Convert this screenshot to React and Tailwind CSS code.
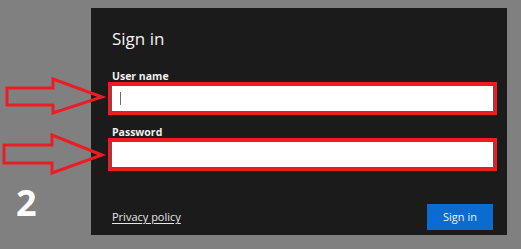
import React from "react";

const font = { fontFamily: '"Open Sans", "Noto Sans", sans-serif' };

const RedField = ({ cursor = false }) => (
  <div className="mr-[10px] -ml-[4px] h-[33px] border-[3px] border-[#ed1c24]">
    <div className="relative h-full border border-[#5a5a5a] bg-white">
      {cursor && (
        <div className="absolute left-[8px] top-[6px] h-[13px] w-px bg-[#6b6b6b]" />
      )}
    </div>
  </div>
);

const Arrows = () => (
  <svg
    className="pointer-events-none absolute left-0 top-0"
    width="521"
    height="249"
    viewBox="0 0 521 249"
  >
    <g fill="none" stroke="#ed1c24" strokeWidth="3" strokeLinejoin="miter">
      <polygon points="7,88 53,88 53,79 102,97 53,113 53,105 7,105" />
      <polygon points="4,145 52,145 52,135 102,155 52,173 52,163 4,163" />
    </g>
  </svg>
);

export default function App() {
  return (
    <div
      className="relative h-[249px] w-[521px] overflow-hidden bg-[#808080]"
      style={font}
    >
      <div className="ml-[91px] mt-[8px] flex h-[227px] w-[416px] flex-col bg-[#1b1b1b] pl-[21px] pt-[19px]">
        <div className="text-[17px] font-normal leading-[24px] text-[#f2f2f2]">
          Sign in
        </div>
        <div className="mt-[19px] text-[10.5px] font-bold leading-[12px] text-[#f0f0f0]">
          User name
        </div>
        <RedField cursor />
        <div className="mt-[11px] text-[10.5px] font-bold leading-[12px] text-[#f0f0f0]">
          Password
        </div>
        <RedField />
        <div className="mr-[14px] mt-[33px] flex items-center justify-between">
          <span className="text-[11px] leading-[14px] text-[#e6e6e6] underline underline-offset-2">
            Privacy policy
          </span>
          <button className="h-[26px] w-[66px] bg-[#0a6ccf] text-[11px] text-[#eaf2fb]">
            Sign in
          </button>
        </div>
      </div>
      <div className="absolute left-[16px] top-[181px] text-[36px] font-bold leading-[44px] text-white">
        2
      </div>
      <Arrows />
    </div>
  );
}
